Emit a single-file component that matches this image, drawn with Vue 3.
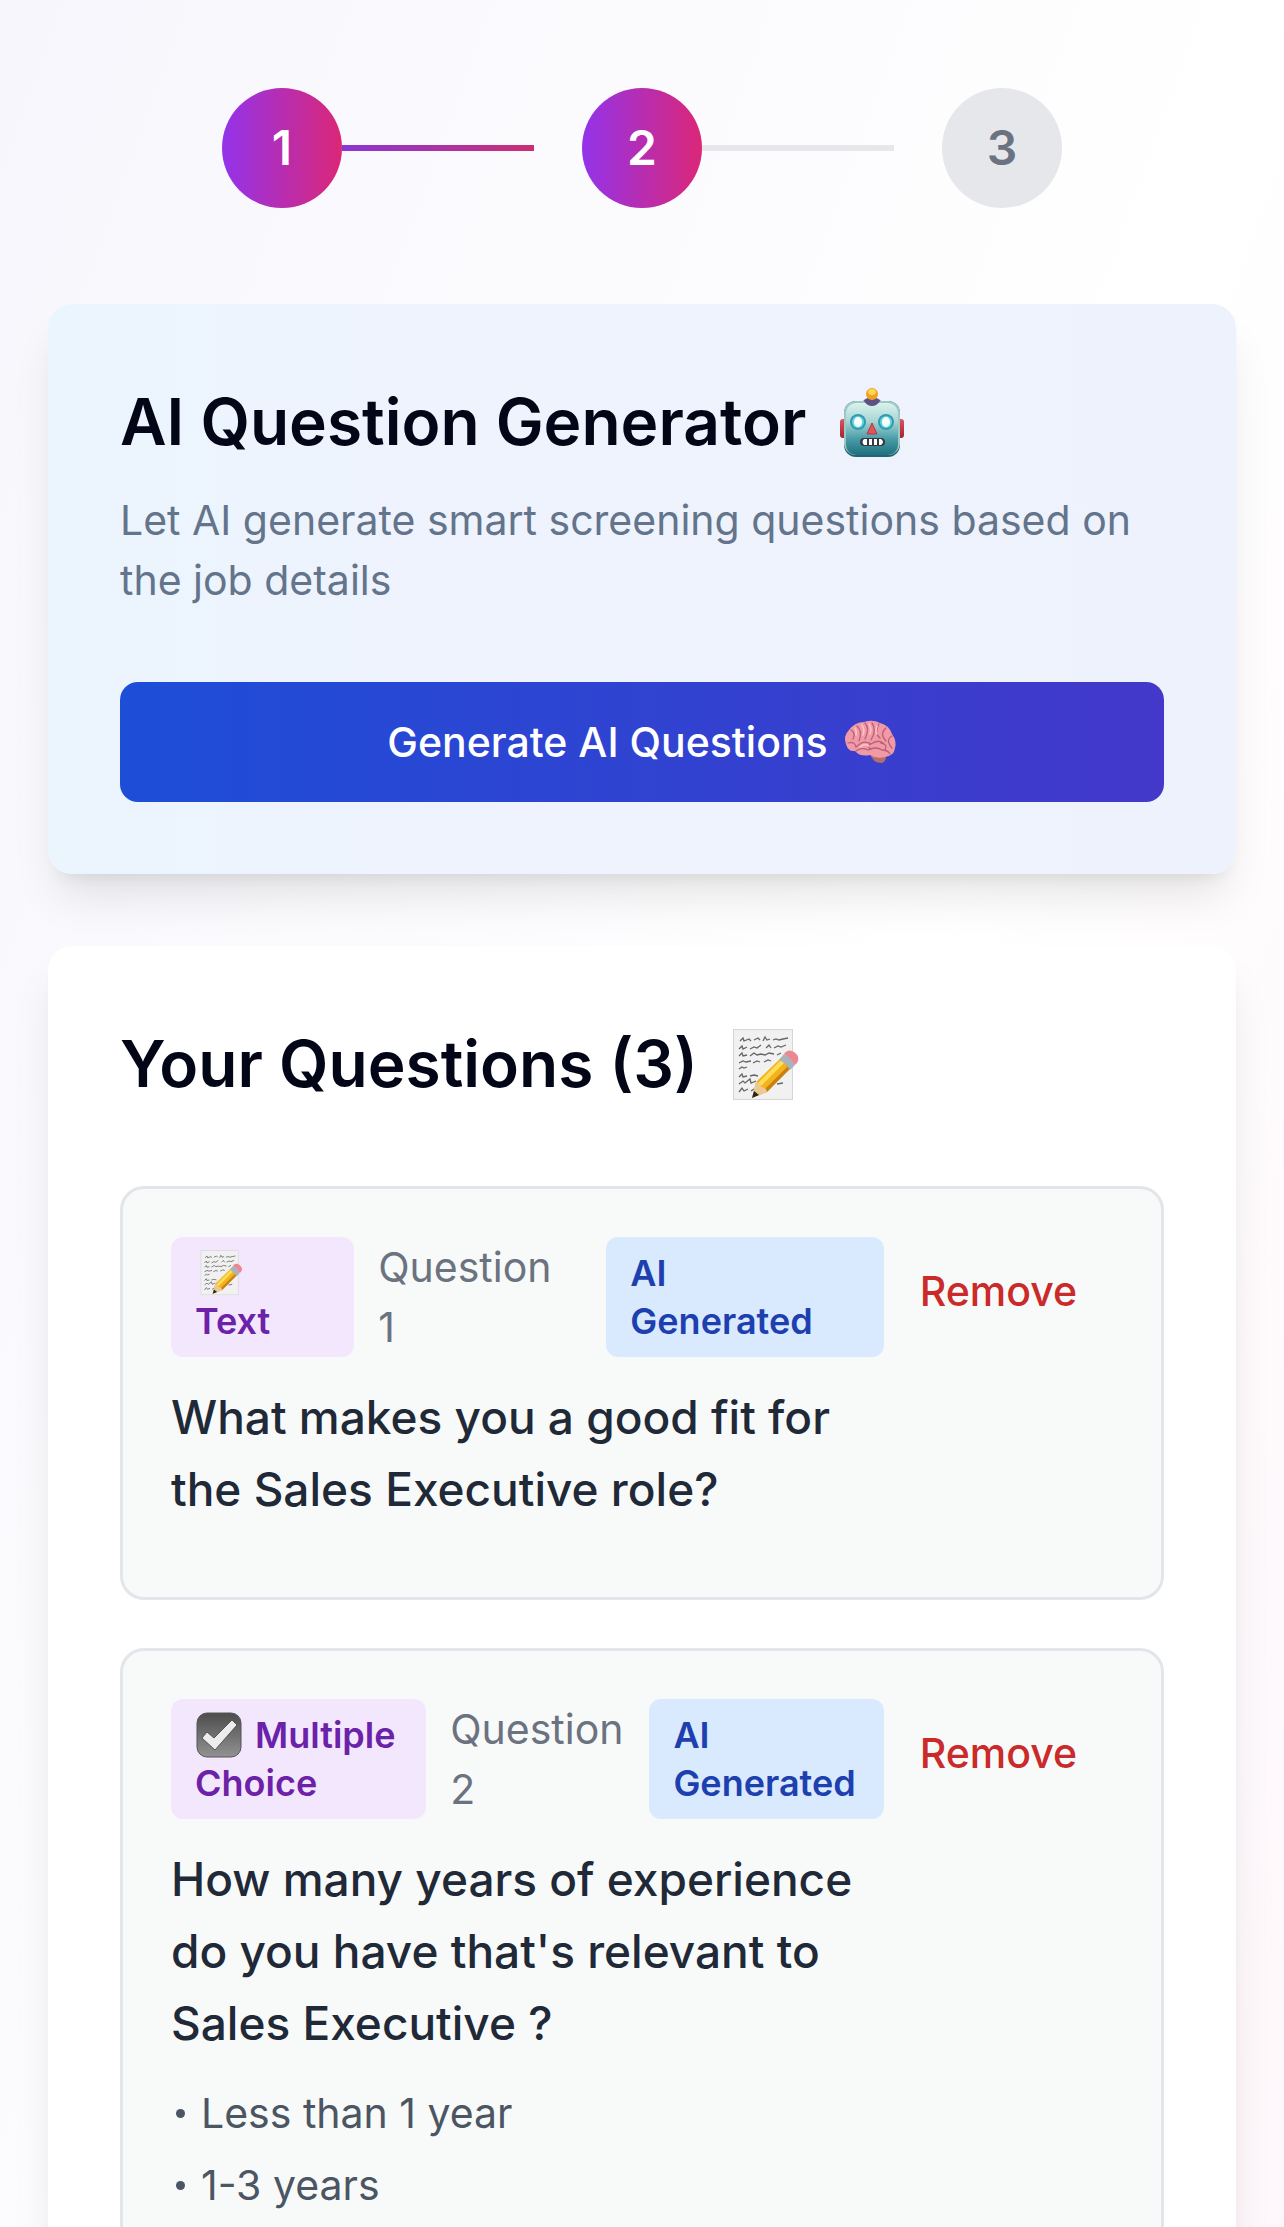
<template>
  <div class="page">
    <nav class="stepper" aria-label="Progress">
      <template v-for="step in steps" :key="step">
        <span class="step" :class="{ active: step <= currentStep }">{{ step }}</span>
        <span
          v-if="step < steps.length"
          class="step-line"
          :class="{ done: step < currentStep }"
        ></span>
      </template>
    </nav>

    <!-- Generator -->
    <section class="card generator">
      <h2 class="card-title">
        AI Question Generator
        <svg class="title-icon robot" viewBox="0 0 66 72" aria-hidden="true">
          <defs>
            <linearGradient id="face" x1="0" y1="0" x2="0" y2="1">
              <stop offset="0" stop-color="#d9f3ec" />
              <stop offset=".35" stop-color="#a9d5d3" />
              <stop offset=".7" stop-color="#469ba6" />
              <stop offset="1" stop-color="#216f7e" />
            </linearGradient>
            <linearGradient id="ear" x1="0" y1="0" x2="0" y2="1">
              <stop offset="0" stop-color="#d9545d" />
              <stop offset="1" stop-color="#a52433" />
            </linearGradient>
          </defs>
          <rect x="1" y="33" width="7" height="19" rx="3" fill="url(#ear)" />
          <rect x="58" y="33" width="7" height="19" rx="3" fill="url(#ear)" />
          <path d="M24 15 Q33 7 42 15 Q39 21 33 21 Q27 21 24 15Z" fill="#5f5082" />
          <rect x="5" y="15" width="56" height="56" rx="12" fill="#1f6673" />
          <rect x="5" y="15" width="56" height="54" rx="12" fill="#9fc9c2" />
          <rect x="7" y="17" width="52" height="52" rx="10" fill="url(#face)" />
          <path d="M25 15 H41 Q38 20 33 20 Q28 20 25 15Z" fill="#5f5082" />
          <circle cx="33" cy="8" r="6" fill="#f0a020" />
          <ellipse cx="33" cy="6" rx="4" ry="3" fill="#ffd84f" />
          <circle cx="19" cy="36" r="8" fill="#2b9eb4" />
          <circle cx="19" cy="36" r="6" fill="#6fd0dc" />
          <ellipse cx="19" cy="36" rx="4" ry="5" fill="#f4fffb" />
          <circle cx="47" cy="36" r="8" fill="#2b9eb4" />
          <circle cx="47" cy="36" r="6" fill="#6fd0dc" />
          <ellipse cx="47" cy="36" rx="4" ry="5" fill="#f4fffb" />
          <path d="M33 37 L38 48 H28Z" fill="#e2545a" stroke="#ad3a47" stroke-linejoin="round" />
          <rect x="21" y="52" width="25" height="8" rx="4" fill="#343b40" />
          <path d="M25 53h3v6h-3q-3-3 0-6zM30 53h3v6h-3zM35 53h3v6h-3zM40 53h2q4 3 0 6h-2z" fill="#fff" />
        </svg>
      </h2>
      <p class="card-subtitle">Let AI generate smart screening questions based on the job details</p>
      <button type="button" class="generate-btn">
        Generate AI Questions
        <svg class="brain" viewBox="0 0 54 46" aria-hidden="true">
          <path d="M27 34 Q29 44 39 44 Q44 42 43 34Z" fill="#b66e69" />
          <path
            d="M3 25 Q0 17 6 11 Q12 3 21 3 Q30 0 37 4 Q46 6 49 15 Q54 22 52 29 Q51 37 42 38 Q33 40 27 36 Q17 38 12 32 Q5 33 3 25Z"
            fill="#f09aa7"
          />
          <g fill="none" stroke="#bb6076" stroke-width="1.3" stroke-linecap="round">
            <path d="M5 24 Q12 22 13 28 Q21 20 28 25 Q35 20 40 24" />
            <path d="M13 32 Q19 28 25 31 Q33 27 39 31 Q45 31 47 35" />
            <path d="M8 11 Q13 14 10 20M14 7 Q20 12 16 22M22 4 Q27 9 22 20M29 4 Q34 11 28 21M36 5 Q31 14 37 19M43 9 Q36 15 43 22M49 17 Q42 21 49 29M38 24 Q45 25 42 31M27 25 Q24 28 28 30" />
          </g>
          <path d="M12 9q2 3 1 7M19 6q3 5 1 10M26 5q3 5 1 10M34 7q-2 5 0 8M17 28q5-4 9-1" fill="none" stroke="#ffc5c9" stroke-width="1.5" stroke-linecap="round" />
        </svg>
      </button>
    </section>

    <!-- Question list -->
    <section class="card questions">
      <h2 class="card-title">
        Your Questions ({{ total }})
        <svg class="title-icon" viewBox="-2 -1 66 72" aria-hidden="true">
          <use href="#memo" />
        </svg>
      </h2>

      <ul class="question-list">
        <li v-for="question in questions" :key="question.number" class="question">
          <div class="question-main">
            <div class="question-meta" :class="question.type">
              <span class="badge type-badge">
                <svg v-if="question.type === 'text'" class="badge-icon" viewBox="-9 -2 76 76" aria-hidden="true">
                  <g id="memo">
                    <rect x="0" y="0" width="60" height="71" fill="#d5d6d6" />
                    <rect x="1" y="1" width="58" height="69" fill="#f0f1f0" />
                    <g fill="none" stroke="#666" stroke-width="1.3">
                      <path d="M7 12l3-3 1 3 5-2 2 2M21 11l4-2 2 2M30 12l2-4 2 3 3-1M40 11l3-1 3 1 4-1 5-1" />
                      <path d="M6 20l3-3 1 3 4-2M17 20l4-2 3 1 4-3M33 19l3-3 2 3M41 19l4-2 3 1 5-2" />
                      <path d="M6 27l3-3 1 3 4-1M17 27l4-3 3 2 4-1 4 1 4-2 5 1M44 26l4-2" />
                      <path d="M6 34l4-2 3 1 5-1M20 34l4-2 3 1M31 33l4-2 3 1" />
                      <path d="M6 40l3-2 2 1 3-1M6 48l3-3 1 3 4-1M17 47l4-1 4 1" />
                      <path d="M6 55l4-3 2 2 5-4 1 4 5-2M6 63l3-4 2 3 4-2M18 62l3-2M44 55l6-1" />
                    </g>
                    <path d="M19 69 L23 53 L50 27 L59 37 L34 63Z" fill="#f2b31c" />
                    <path d="M25 54 L50 29 L53 32 L28 57Z" fill="#ffdc55" />
                    <path d="M31 61 L56 36 L59 38 L34 63Z" fill="#c98011" />
                    <path d="M19 69 L23 53 Q28 54 28 58 Q33 58 34 63Z" fill="#ecc894" />
                    <path d="M19 69 L21 62 L26 66Z" fill="#252525" />
                    <path d="M46 31 L51 25 Q59 29 62 36 L57 41 Q53 34 46 31Z" fill="#a9b3bb" />
                    <path d="M51 25 Q55 19 61 23 Q68 28 64 34 L62 36 Q58 29 51 25Z" fill="#ed8790" />
                  </g>
                </svg>
                <svg v-else class="badge-icon" viewBox="0 0 48 48" aria-hidden="true">
                  <defs>
                    <linearGradient id="box" x1="0" y1="0" x2="0" y2="1">
                      <stop offset="0" stop-color="#4d4d4d" />
                      <stop offset="1" stop-color="#929292" />
                    </linearGradient>
                  </defs>
                  <rect x="2" y="2" width="44" height="44" rx="10" fill="url(#box)" stroke="#555" />
                  <path d="M7 27 L12 21 L19 27 L37 9 L42 14 L20 39Z" fill="#ededed" stroke="#555" />
                </svg>
                <span class="badge-label">{{ question.label }}</span>
              </span>
              <span class="question-number">Question<br />{{ question.number }}</span>
              <span class="badge ai-badge">AI<br />Generated</span>
            </div>
            <p class="question-text">{{ question.text }}</p>
            <ul v-if="question.options.length" class="options">
              <li v-for="option in question.options" :key="option" class="option">{{ option }}</li>
            </ul>
          </div>
          <button type="button" class="remove-btn" @click="removeQuestion(question.number)">
            Remove
          </button>
        </li>
      </ul>
    </section>
  </div>
</template>

<script setup>
import { ref } from 'vue'

const steps = [1, 2, 3]
const currentStep = ref(2)
const total = ref(3)

const questions = ref([
  {
    number: 1,
    type: 'text',
    label: 'Text',
    text: 'What makes you a good fit for the Sales Executive role?',
    options: [],
  },
  {
    number: 2,
    type: 'choice',
    label: 'Multiple Choice',
    text: "How many years of experience do you have that's relevant to Sales Executive ?",
    options: ['Less than 1 year', '1-3 years'],
  },
])

function removeQuestion(number) {
  questions.value = questions.value.filter(q => q.number !== number)
  total.value -= 1
}
</script>

<style>
body {
  margin: 0;
}
</style>

<style scoped>
.page {
  box-sizing: border-box;
  height: 100vh;
  overflow: hidden;
  padding: 88px 48px 0;
  background: linear-gradient(to bottom right, #f7f6fc, #ffffff 50%, #fdf2f8);
  background-size: 100% 160%;
  color: #020617;
  font-family: Inter, "Liberation Sans", sans-serif;
  font-size: 41px;
  line-height: 60px;
}
.page * {
  box-sizing: border-box;
}

/* Stepper */
.stepper {
  display: flex;
  align-items: center;
  justify-content: center;
  margin-bottom: 96px;
}
.step {
  display: flex;
  align-items: center;
  justify-content: center;
  width: 120px;
  height: 120px;
  border-radius: 50%;
  background: #e5e7eb;
  color: #6b7280;
  font-size: 48px;
  font-weight: 600;
}
.step.active {
  background: linear-gradient(to right, #9333ea, #db2777);
  color: #ffffff;
}
.step-line {
  width: 192px;
  height: 6px;
  margin-right: 48px;
  background: #e5e7eb;
}
.step-line.done {
  background: linear-gradient(to right, #8b36d4, #cb2f75);
}

/* Cards */
.card {
  padding: 72px;
  border-radius: 24px;
  background: #ffffff;
  box-shadow: 0 30px 45px -9px rgba(0, 0, 0, 0.1), 0 12px 18px -12px rgba(0, 0, 0, 0.1);
}
.card + .card {
  margin-top: 72px;
}
.generator {
  background: linear-gradient(to right, #ebf5fd, #eef3fe 30%, #edf2fd);
}
.card-title {
  display: flex;
  align-items: center;
  gap: 33px;
  margin: 0;
  font-size: 64px;
  font-weight: 600;
  line-height: 92px;
}
.title-icon {
  flex-shrink: 0;
  width: 66px;
  height: 72px;
  overflow: visible;
}
.card-subtitle {
  margin: 22px 0 72px;
  color: #64748b;
}
.generate-btn {
  display: flex;
  align-items: center;
  justify-content: center;
  gap: 15px;
  width: 100%;
  height: 120px;
  border: none;
  border-radius: 18px;
  background: linear-gradient(to right, #1d4ed8, #4338ca);
  color: #ffffff;
  font: inherit;
  font-weight: 500;
  cursor: pointer;
}
.brain {
  width: 54px;
  height: 46px;
}

/* Questions */
.question-list {
  display: flex;
  flex-direction: column;
  gap: 48px;
  margin: 76px 0 0;
  padding: 0;
  list-style: none;
}
.question {
  display: flex;
  align-items: flex-start;
  padding: 48px;
  border: 3px solid #e2e5ea;
  border-radius: 24px;
  background: #f8faf9;
}
.question-main {
  flex: 1;
  min-width: 0;
}
.question-meta {
  display: grid;
  gap: 24px;
}
.question-meta.text {
  grid-template-columns: 183fr 204fr 277fr;
}
.question-meta.choice {
  grid-template-columns: 255fr 175fr 234fr;
}
.badge {
  padding: 12px 24px;
  border-radius: 12px;
  font-size: 36px;
  font-weight: 600;
  line-height: 48px;
}
.type-badge {
  background: #f3e7fd;
  color: #6b21a8;
}
.ai-badge {
  background: #daeafe;
  color: #1e40af;
}
.badge-icon {
  width: 48px;
  height: 48px;
  margin-right: 12px;
  vertical-align: top;
}
.text .badge-label {
  display: block;
}
.question-number {
  color: #6b7280;
}
.question-text {
  margin: 24px 0;
  color: #1f2937;
  font-size: 46px;
  font-weight: 500;
  line-height: 72px;
}
.options {
  display: flex;
  flex-direction: column;
  gap: 12px;
  margin: 0 0 24px;
  padding: 0;
  list-style: none;
  color: #4b5563;
}
.option {
  display: flex;
  align-items: center;
  gap: 16px;
  padding-left: 5px;
}
.option::before {
  content: "";
  width: 9px;
  height: 9px;
  border-radius: 50%;
  background: currentColor;
}
.remove-btn {
  height: 108px;
  padding: 0 36px;
  border: none;
  background: transparent;
  color: #cb2a2a;
  font: inherit;
  font-weight: 500;
  cursor: pointer;
}
</style>
